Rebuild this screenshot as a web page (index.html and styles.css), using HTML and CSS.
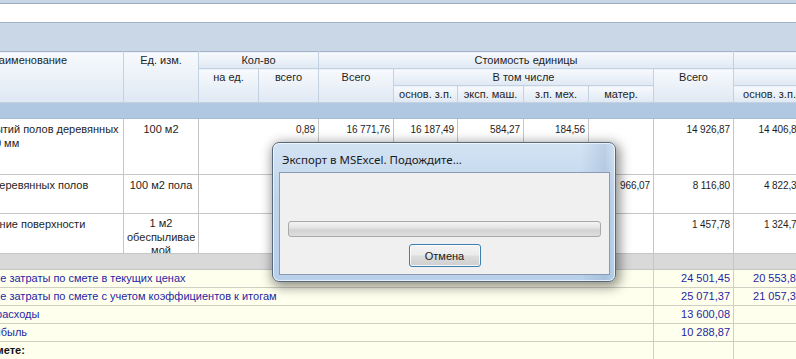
FILE: index.html
```html
<!DOCTYPE html>
<html lang="ru">
<head>
  <meta charset="UTF-8" />
  <title>Смета</title>
  <link rel="stylesheet" href="styles.css">
</head>
<body>
  <div class="toolbar"></div>
  <div class="filter"></div>
  <div class="groupbar"></div>

  <div class="sheet">
    <table class="grid">
      <colgroup>
        <col style="width:189px"><col style="width:75px"><col style="width:60px"><col style="width:60px">
        <col style="width:75px"><col style="width:64px"><col style="width:66px"><col style="width:65px">
        <col style="width:65px"><col style="width:80px"><col style="width:72px">
      </colgroup>
      <thead>
        <tr>
          <th rowspan="3">Наименование</th>
          <th rowspan="3">Ед. изм.</th>
          <th colspan="2">Кол-во</th>
          <th colspan="6">Стоимость единицы</th>
          <th colspan="2"></th>
        </tr>
        <tr>
          <th rowspan="2">на ед.</th>
          <th rowspan="2">всего</th>
          <th rowspan="2">Всего</th>
          <th colspan="4">В том числе</th>
          <th rowspan="2">Всего</th>
          <th></th>
        </tr>
        <tr>
          <th>основ. з.п.</th>
          <th>эксп. маш.</th>
          <th>з.п. мех.</th>
          <th>матер.</th>
          <th>основ. з.п.</th>
        </tr>
      </thead>
      <tbody>
        <tr class="band blue"><td colspan="11"></td></tr>

        <tr class="row r1">
          <td class="name">Смена покрытий полов деревянных<br>толщиной 40 мм</td>
          <td class="unit">100 м2</td>
          <td class="num nosep"></td>
          <td class="num">0,89</td>
          <td class="num">16 771,76</td>
          <td class="num">16 187,49</td>
          <td class="num">584,27</td>
          <td class="num">184,56</td>
          <td class="num"></td>
          <td class="num">14 926,87</td>
          <td class="num">14 406,87</td>
        </tr>
        <tr class="row r2">
          <td class="name">Шлифовка деревянных полов</td>
          <td class="unit">100 м2 пола</td>
          <td class="num nosep"></td>
          <td class="num">0,89</td>
          <td class="num">9 120,00</td>
          <td class="num">5 418,34</td>
          <td class="num">1 735,59</td>
          <td class="num">102,12</td>
          <td class="num">966,07</td>
          <td class="num">8 116,80</td>
          <td class="num">4 822,32</td>
        </tr>
        <tr class="row r3">
          <td class="name">Обеспыливание поверхности</td>
          <td class="unit"><div class="clip">1 м2<br>обеспыливае<br>мой</div></td>
          <td class="num nosep"></td>
          <td class="num">89,00</td>
          <td class="num">16,38</td>
          <td class="num">14,88</td>
          <td class="num"></td>
          <td class="num"></td>
          <td class="num"></td>
          <td class="num">1 457,78</td>
          <td class="num">1 324,72</td>
        </tr>

        <tr class="band grey"><td colspan="9"></td><td></td><td></td></tr>

        <tr class="total">
          <td class="label" colspan="9">Итого прямые затраты по смете в текущих ценах</td>
          <td class="num">24 501,45</td>
          <td class="num">20 553,85</td>
        </tr>
        <tr class="total">
          <td class="label" colspan="9">Итого прямые затраты по смете с учетом коэффициентов к итогам</td>
          <td class="num">25 071,37</td>
          <td class="num">21 057,31</td>
        </tr>
        <tr class="total">
          <td class="label" colspan="9">Накладные расходы</td>
          <td class="num">13 600,08</td>
          <td class="num"></td>
        </tr>
        <tr class="total">
          <td class="label" colspan="9">Сметная прибыль</td>
          <td class="num">10 288,87</td>
          <td class="num"></td>
        </tr>
        <tr class="total grand">
          <td class="label" colspan="9">Итого по смете:</td>
          <td class="num"></td>
          <td class="num"></td>
        </tr>
      </tbody>
    </table>
  </div>

  <div class="dialog">
    <div class="dialog-title">Экспорт в MSExcel. Подождите...</div>
    <div class="dialog-body">
      <div class="progress"></div>
      <button class="btn">Отмена</button>
    </div>
  </div>
</body>
</html>
```

FILE: styles.css
```css
body {
  margin: 0;
  width: 796px;
  height: 359px;
  overflow: hidden;
  position: relative;
  font-family: "Liberation Sans", Arial, sans-serif;
  font-size: 11px;
  color: #1e1e1e;
  background: #ffffee;
}
.toolbar {
  height: 3px;
  background: #c8d5e5;
  border-bottom: 1px solid #9dacc0;
}
.filter {
  height: 18px;
  background: #ffffff;
  border-bottom: 1px solid #a4b2c5;
}
.groupbar {
  height: 28px;
  background: #cad7e7;
}
.sheet {
  width: 796px;
  overflow: hidden;
}
.grid {
  margin-left: -66px;
  border-collapse: collapse;
  table-layout: fixed;
  width: 871px;
  min-width: 871px;
}
.grid thead tr {
  height: 17px;
}
.grid th {
  height: auto;
  padding: 1px 2px 0;
  line-height: 14px;
  font-weight: normal;
  vertical-align: top;
  text-align: center;
  white-space: nowrap;
  background: linear-gradient(#f7fafd, #dfe8f3);
  border: 1px solid #c4d1e1;
  border-top-color: #a3b2c6;
}
.grid td {
  padding: 0 3px;
  border: 1px solid #c6c6c6;
  vertical-align: top;
  line-height: 14px;
}
.band {
  height: 16px;
}
.band td {
  padding: 0;
}
.band.blue td {
  background: #b0c8e1;
  border-color: #a5bcd6;
}
.band.grey td {
  background: #d9d9d9;
  border-color: #c6c6c6;
}
.row td {
  background: #ffffff;
  padding-top: 3px;
  white-space: nowrap;
}
.r1 { height: 56px; }
.r2 { height: 39px; }
.r3 { height: 40px; }
.grid .name,
.grid .label {
  padding-left: 0;
}
.row .unit {
  text-align: center;
}
.row .clip {
  height: 36px;
  overflow: hidden;
  line-height: 13.5px;
}
.row .nosep {
  border-right-color: #ffffff;
}
.num {
  text-align: right;
  white-space: nowrap;
}
.row .num {
  font-size: 10px;
  letter-spacing: -0.1px;
  padding-top: 4px;
  line-height: 13px;
}
.total {
  height: 18px;
}
.total td {
  line-height: 16px;
  padding-top: 0;
  padding-bottom: 0;
  background: #ffffee;
  color: #2626a4;
  border-color: #cfcfc4;
  white-space: nowrap;
}
.total.grand td {
  color: #111111;
  font-weight: bold;
}
.total.grand .label {
  padding-left: 4px;
}

/* export dialog */
.dialog {
  position: absolute;
  left: 272px;
  top: 142px;
  width: 342px;
  height: 138px;
  border: 1px solid #59697c;
  border-radius: 7px;
  background: linear-gradient(90deg, rgba(255,255,255,0) 90%, rgba(120,150,185,0.25) 97%, rgba(255,255,255,0)),
              linear-gradient(#d3e3f4, #bfd5ec 40%, #b8d0e9);
  box-shadow: 2px 3px 12px 2px rgba(0, 0, 0, 0.45), inset 0 0 0 1px rgba(255, 255, 255, 0.65);
}
.dialog-title {
  height: 29px;
  line-height: 33px;
  padding-left: 9px;
  font-family: "Noto Sans", "Liberation Sans", sans-serif;
  font-size: 11.5px;
  color: #1a1a1a;
}
.dialog-body {
  margin: 0 5px 0 6px;
  height: 101px;
  border: 1px solid #8a9ab0;
  background: #f0f0f0;
  display: flex;
  flex-direction: column;
  align-items: center;
}
.progress {
  margin-top: 48px;
  width: 311px;
  height: 14px;
  border: 1px solid #a9a9a9;
  border-radius: 3px;
  background: linear-gradient(#f4f4f4, #e2e2e2 45%, #d3d3d3 55%, #dedede);
}
.btn {
  margin-top: 7px;
  width: 72px;
  height: 23px;
  padding: 0;
  border: 1px solid #3c7fb1;
  border-radius: 3px;
  background: linear-gradient(#f4f4f4, #ebebeb 48%, #dddddd 52%, #cfcfcf);
  box-shadow: inset 0 0 0 1px rgba(255, 255, 255, 0.8);
  font-family: "Liberation Sans", Arial, sans-serif;
  font-size: 11px;
  color: #1a1a1a;
}
```
